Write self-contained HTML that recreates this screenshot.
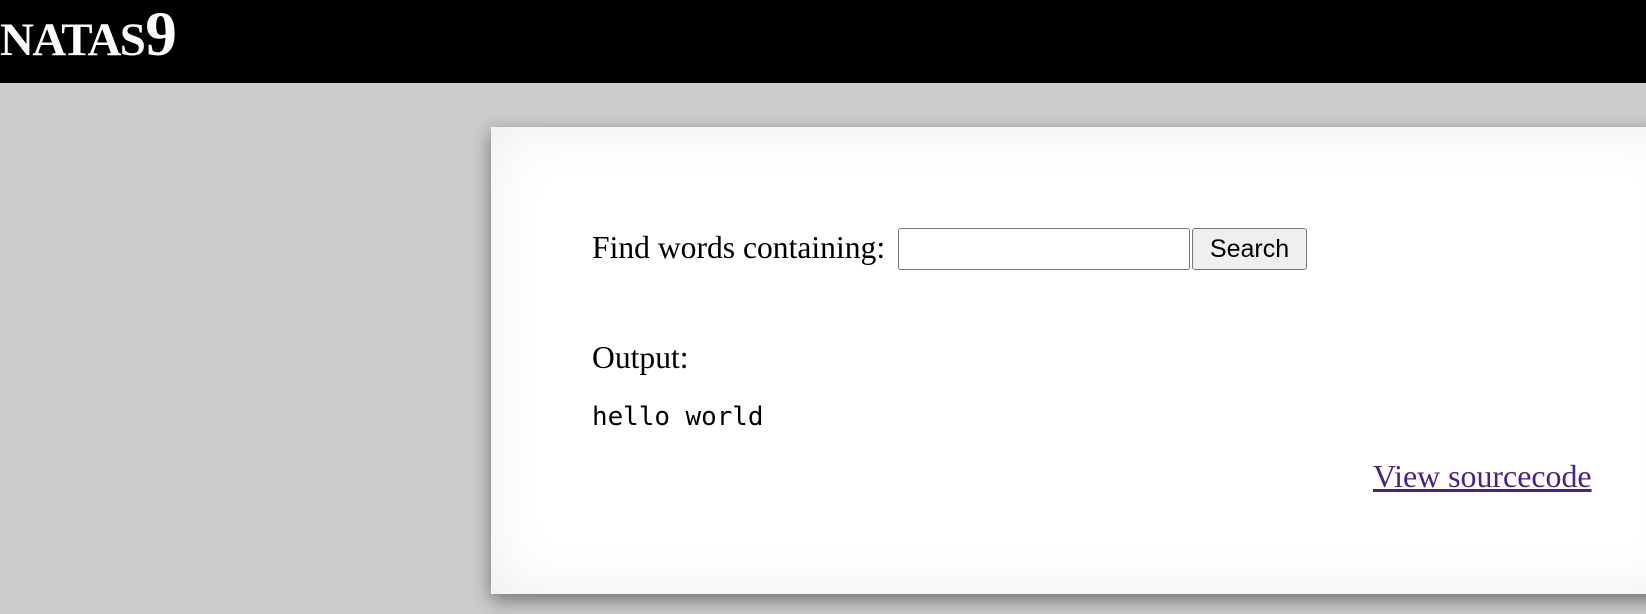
<!DOCTYPE html>
<html><head><style>
html,body{margin:0;padding:0;width:1646px;height:614px;overflow:hidden;background:#cccccc;font-family:"Liberation Serif",serif;}
#hdr{position:absolute;left:0;top:0;width:1646px;height:83px;background:#000;}
#title{position:absolute;left:0;top:3px;color:#fff;font-weight:bold;white-space:nowrap;line-height:1;}
#title .n{font-size:47px;letter-spacing:-1.6px;}
#title .d{font-size:63px;margin-left:1px;}
#card{position:absolute;left:491px;top:127px;width:1200px;height:467px;background:#fff;box-shadow:0 6px 18px rgba(0,0,0,.45), inset 0 0 60px rgba(0,0,0,.07);}
.t{position:absolute;font-size:31.6px;color:#000;white-space:nowrap;line-height:1;}
#inp{position:absolute;left:898px;top:228px;width:290px;height:40px;border:1.5px solid #777;border-radius:3px;background:#fff;}
#btn{position:absolute;left:1192px;top:228px;width:113px;height:40px;border:1.5px solid #777;border-radius:3px;background:#efefef;font-family:"Liberation Sans",sans-serif;font-size:25px;text-align:center;line-height:40px;}
#mono{position:absolute;left:592px;top:405px;font-family:"DejaVu Sans Mono","Liberation Mono",monospace;font-size:25.9px;line-height:1;}
#lnk{position:absolute;left:1373px;top:461px;font-size:31.9px;color:#4a2185;text-decoration:underline;line-height:1;white-space:nowrap;}
</style></head><body>
<div id="hdr"><div id="title"><span class="n">NATAS</span><span class="d">9</span></div></div>
<div id="card"></div>
<div class="t" style="left:592px;top:232px">Find words containing:</div>
<div id="inp"></div>
<div id="btn">Search</div>
<div class="t" style="left:592px;top:342px">Output:</div>
<div id="mono">hello world</div>
<div id="lnk">View sourcecode</div>
</body></html>
